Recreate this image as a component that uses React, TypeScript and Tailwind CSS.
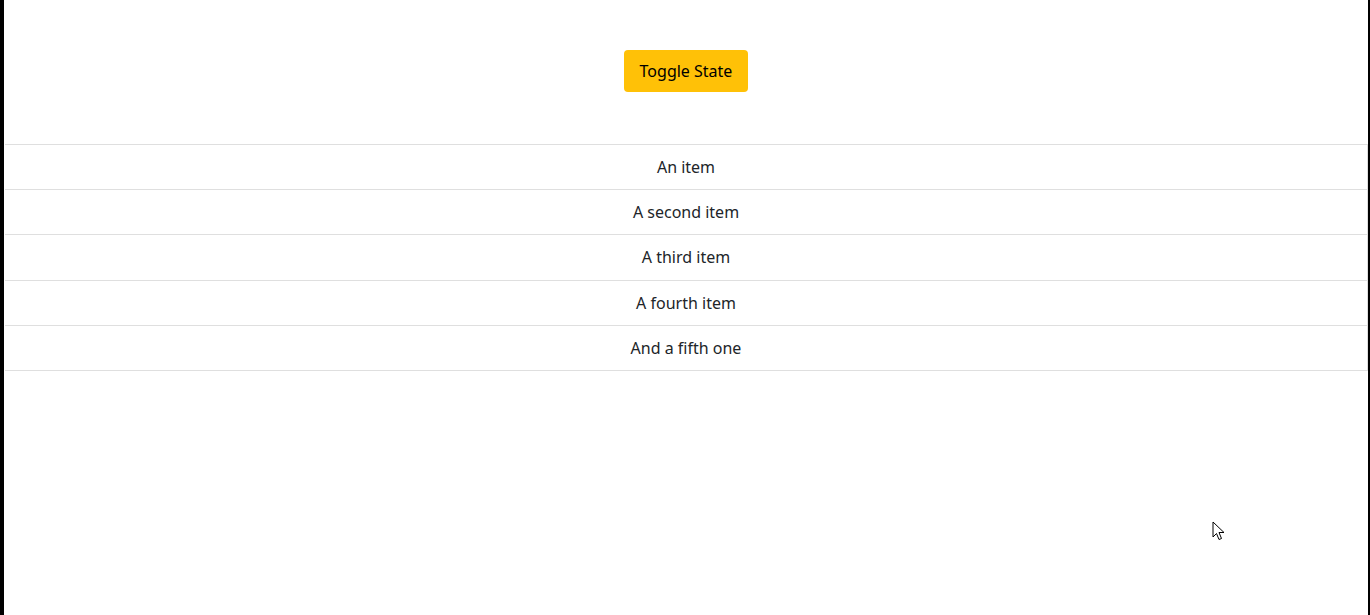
import { useState } from "react";

const items = ["An item", "A second item", "A third item", "A fourth item", "And a fifth one"];

export default function App() {
  const [on, setOn] = useState(false);

  return (
    <div
      className="relative h-screen bg-white border-l-4 border-r-2 border-black text-[#212529]"
      style={{ fontFamily: '"Noto Sans", "Open Sans", sans-serif' }}
    >
      {/* Button */}
      <div className="flex justify-center pt-[50px]">
        <button
          onClick={() => setOn(!on)}
          className="w-[124px] h-[42px] rounded-[4px] bg-[#ffc107] text-[16px] text-black"
        >
          Toggle State
        </button>
      </div>

      {/* List */}
      <ul className="mt-[52px] ml-px border-t border-r border-[#dfdfdf]">
        {items.map((item) => (
          <li
            key={item}
            className="h-[45.2px] flex items-center justify-center border-b border-[#dfdfdf] text-[16px]"
          >
            {item}
          </li>
        ))}
      </ul>

      {/* Mouse cursor */}
      <svg
        className="absolute left-[1208px] top-[521px]"
        width="14"
        height="22"
        viewBox="0 0 14 22"
      >
        <path
          d="M1 1 L1 16 L4.5 12.5 L7 18.5 L9.5 17.5 L7 11.5 L12 11.5 Z"
          fill="white"
          stroke="black"
          strokeWidth="1"
          strokeLinejoin="miter"
        />
      </svg>
    </div>
  );
}
